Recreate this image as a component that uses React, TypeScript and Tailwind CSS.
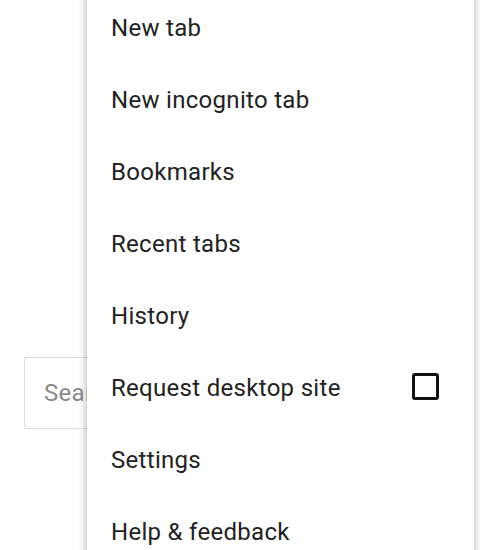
import React from "react";

const items = [
  "New tab",
  "New incognito tab",
  "Bookmarks",
  "Recent tabs",
  "History",
  "Request desktop site",
  "Settings",
  "Help & feedback",
];

export default function App() {
  return (
    <div
      className="relative w-[480px] h-[550px] overflow-hidden bg-white"
      style={{ fontFamily: "Roboto, 'Noto Sans', sans-serif" }}
    >
      <div className="pt-[357px] pl-[24px]">
        <div className="h-[72px] w-[200px] border border-[#dcdcdc] rounded-[2px] flex items-center pl-[19px] text-[24px] tracking-[0.3px] text-[#8a8a8a]">
          Search
        </div>
      </div>
      <div className="absolute left-[87px] top-[-8px] w-[387px] bg-white shadow-[0_0_8px_rgba(0,0,0,0.35)]">
        {items.map((t) => (
          <div
            key={t}
            className="h-[72px] flex items-center justify-between pl-[24px] pr-[35px] text-[24px] tracking-[0.3px] text-[#222222]"
          >
            <span>{t}</span>
            {t === "Request desktop site" && (
              <div className="w-[27px] h-[27px] mb-[3px] border-[3px] border-[#111] rounded-[3px]" />
            )}
          </div>
        ))}
      </div>
    </div>
  );
}
